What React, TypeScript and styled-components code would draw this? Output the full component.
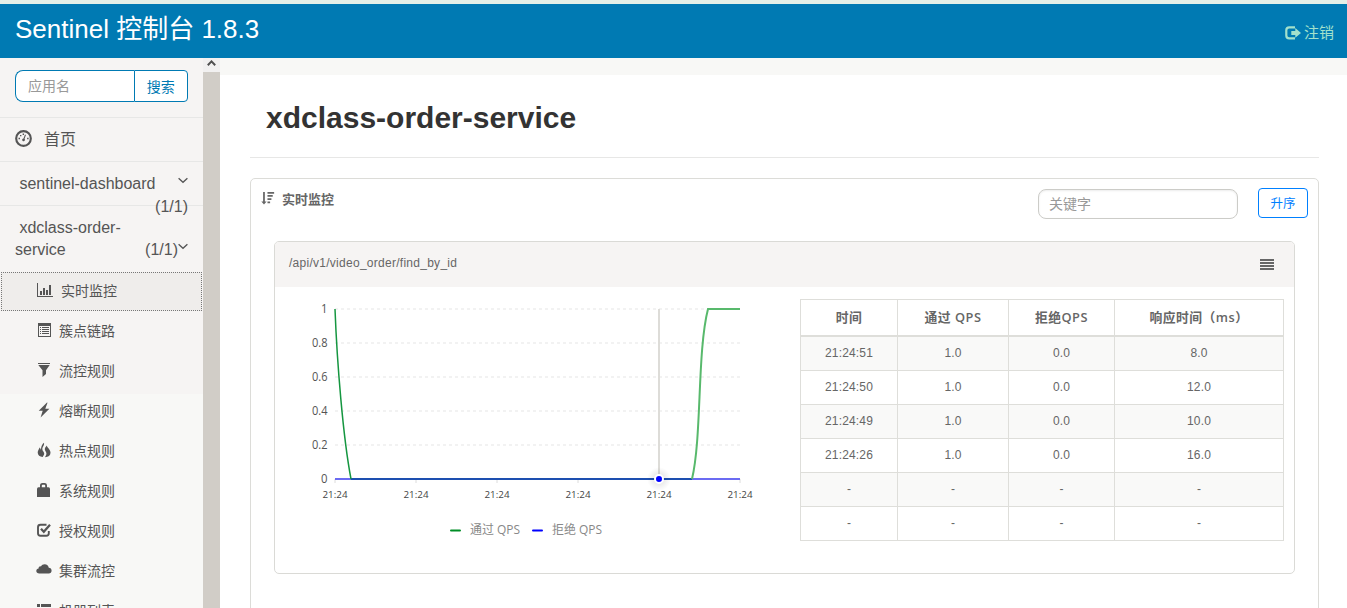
import React from "react";
import styled, { createGlobalStyle, css } from "styled-components";

const GlobalStyle = createGlobalStyle`
  *, *::before, *::after { box-sizing: border-box; }
  html, body { margin: 0; padding: 0; overflow: hidden; }
  body {
    background: #fff;
    color: #555;
    font-family: "Liberation Sans", "Noto Sans CJK SC", sans-serif;
    font-size: 14px;
  }
`;

const Page = styled.div`
  display: flex;
  flex-direction: column;
  height: 608px;
  width: 1347px;
  overflow: hidden;
`;

const Header = styled.header`
  display: flex;
  flex: none;
  justify-content: space-between;
  height: 58px;
  padding: 0 13px 0 15px;
  border-top: 4px solid #e4f0e8;
  background: #007ab3;
`;

const Brand = styled.div`
  color: #fff;
  font-size: 26px;
  line-height: 50px;
  white-space: nowrap;
`;

const Logout = styled.a`
  display: flex;
  align-items: center;
  gap: 3px;
  padding-top: 4px;
  color: #a3e1cc;
  font-size: 15px;
  line-height: 20px;
`;

const Body = styled.div`
  display: flex;
  flex: 1;
  min-height: 0;
`;

const Sidebar = styled.nav`
  width: 203px;
  flex: none;
  overflow: hidden;
  background: linear-gradient(#f6f4f3 336px, #f8f8f6 336px);
`;

const SearchBox = styled.div`
  display: flex;
  height: 60px;
  padding: 12px 15px 0;
  border-bottom: 1px solid #e7e7e6;
`;

const SearchField = styled.div`
  width: 120px;
  height: 32px;
  padding-left: 12px;
  border: 1px solid #007ab3;
  border-right: 0;
  border-radius: 8px 0 0 8px;
  background: #fff;
  color: #999;
  font-size: 14px;
  line-height: 31px;
`;

const SearchButton = styled.button`
  width: 54px;
  height: 32px;
  padding: 2px 1px 0 0;
  border: 1px solid #007ab3;
  border-radius: 0 4px 4px 0;
  background: #fff;
  color: #007ab3;
  font: 14px/28px "Liberation Sans", "Noto Sans CJK SC", sans-serif;
`;

const HomeItem = styled.div`
  display: flex;
  align-items: center;
  gap: 12px;
  height: 44px;
  padding: 0 15px 3px;
  border-bottom: 1px solid #e7e7e6;
  font-size: 16px;
`;

const AppItem = styled.div<{ $height: number; $line?: boolean }>`
  height: ${(p) => p.$height}px;
  padding: 11px 15px 0 15px;
  border-bottom: ${(p) => (p.$line ? "1px solid #e7e7e6" : "0")};
  font-size: 16px;
  line-height: 22px;
`;

const AppLine = styled.div<{ $indent?: boolean }>`
  display: flex;
  justify-content: space-between;
  padding-left: ${(p) => (p.$indent ? 4.4 : 0)}px;
  white-space: nowrap;
`;

const AppCount = styled.div`
  display: flex;
  justify-content: flex-end;
  line-height: 24px;
`;

const Caret = styled.svg`
  width: 10px;
  height: 7px;
  margin-top: 4px;
`;

const MenuItem = styled.div<{ $active?: boolean }>`
  display: flex;
  align-items: center;
  gap: ${(p) => (p.$active ? 8 : 7)}px;
  height: 40px;
  padding: 0 0 2px 36px;
  white-space: nowrap;
  ${(p) =>
    p.$active &&
    css`
      height: 39px;
      margin: 0 1px;
      padding: 0 0 3px 35px;
      border: 1px dotted #777;
      background: #efedeb;
    `}
`;

const Glyph = styled.svg<{ $size?: number }>`
  flex: none;
  width: ${(p) => p.$size ?? 16}px;
  height: ${(p) => p.$size ?? 16}px;
  fill: currentColor;
`;

const Scrollbar = styled.div`
  display: flex;
  flex-direction: column;
  flex: none;
  width: 17px;
  background: #d1cdc7;
`;

const ScrollArrow = styled.div`
  display: flex;
  align-items: center;
  justify-content: center;
  height: 14px;
  padding-bottom: 4px;
  background: #f1f0f0;
`;

const Content = styled.main`
  flex: 1;
  min-width: 0;
  padding: 0 28px 0 30px;
  border-top: 17px solid #f8f8f6;
`;

const Title = styled.h1`
  height: 83px;
  margin: 0 0 20px;
  padding: 22px 16px 0;
  border-bottom: 1px solid #e7e7e6;
  color: #333;
  font-size: 30px;
  font-weight: 700;
  line-height: 41px;
`;

const Panel = styled.section`
  height: 500px;
  padding: 0 10px;
  border: 1px solid #dcdcd8;
  border-radius: 5px;
`;

const PanelHead = styled.div`
  display: flex;
  align-items: flex-start;
  height: 62px;
  padding-top: 9px;
`;

const PanelName = styled.div`
  display: flex;
  flex: 1;
  align-items: center;
  gap: 7px;
  height: 20px;
  color: #666;
  font-size: 13px;
  font-weight: 700;
`;

const Keyword = styled.div`
  width: 200px;
  height: 30px;
  margin: 1px 20px 0 0;
  padding-left: 10px;
  border: 1px solid #ccccc8;
  border-radius: 8px;
  box-shadow: inset 0 1px 2px rgba(0, 0, 0, 0.08);
  color: #999;
  font-size: 14px;
  line-height: 28px;
`;

const SortButton = styled.button`
  width: 50px;
  height: 30px;
  padding: 2px 0 0;
  border: 1px solid #0080ff;
  border-radius: 4px;
  background: #fff;
  color: #0080ff;
  font: 12.5px/26px "Liberation Sans", "Noto Sans CJK SC", sans-serif;
`;

const Card = styled.div`
  height: 333px;
  margin: 0 13px;
  border: 1px solid #dadad6;
  border-radius: 5px;
  overflow: hidden;
`;

const CardHead = styled.div`
  display: flex;
  align-items: center;
  justify-content: space-between;
  height: 45px;
  padding: 0 19px 0 14px;
  background: #f6f4f3;
  color: #666;
  font-size: 12px;
  letter-spacing: 0.27px;
`;

const ResourceName = styled.span`
  padding-bottom: 3px;
`;

const CardBody = styled.div`
  display: flex;
  align-items: flex-start;
`;

const Chart = styled.svg`
  flex: none;
  width: 525px;
  height: 286px;
  font-family: "Open Sans", "Noto Sans CJK SC", sans-serif;
`;

const Table = styled.table`
  width: 484px;
  margin-top: 12px;
  border-collapse: collapse;
  table-layout: fixed;
  color: #666;
  font-size: 12px;
  letter-spacing: 0.17px;
  text-align: center;
`;

const Row = styled.tr<{ $odd?: boolean }>`
  height: 34px;
  background: ${(p) => (p.$odd ? "#f9f9f8" : "#fff")};

  tbody &:first-child {
    height: 35px;
  }
`;

const Cell = styled.td`
  padding: 0 0 1px;
  border: 1px solid #dededa;
`;

const HeadCell = styled.th`
  height: 36px;
  padding: 0;
  border: 1px solid #dededa;
  border-bottom-width: 2px;
  font-family: "Open Sans", "Noto Sans CJK SC", sans-serif;
  font-size: 12.8px;
  font-weight: 600;
  line-height: 20px;
  letter-spacing: 0.5px;
  white-space: nowrap;
`;

const ICONS: Record<string, React.ReactNode> = {
  chart: (
    <path d="M0 1h1v13h15v1H0zM3 9h2v4H3zM6 6h2v7H6zM9 8h2v5H9zM12 3h2v10h-2z" />
  ),
  list: (
    <path
      fillRule="evenodd"
      d="M2 1h13v14H2zM3 4v10h11V4zM4 5h1v1H4zM6 5h7v1H6zM4 7h1v1H4zM6 7h7v1H6zM4 9h1v1H4zM6 9h7v1H6zM4 11h1v1H4zM6 11h7v1H6z"
    />
  ),
  filter: <path d="M2 1h12v1H2zM2.300 3h11.400L10 8.300v3.700L6.500 15V8.300z" />,
  flash: <path d="M11 .5 2.700 8.800h4L4.600 15.500 13.400 6.800H9.300L11.500.8z" />,
  fire: (
    <path d="M8 .8c.6 3-1.900 4.100-1.600 6.800.2 1.800 1.800 2.300 1.800 4 0 1.300-.8 2.200-1.500 3.500-3-.3-5-2-5-4.600 0-2.200 1.300-3.200 1.900-5.100.8.700 1.100 1.600 1 2.600C5.600 6.600 4.500 3.800 8 .8zM10.800 3.500c.1 2.200 3.700 3.700 3.700 7.200 0 2.700-2 4.200-5.600 4.500.9-1.200 1.600-2.400 1.500-3.900-.1-1.600-1.600-2.300-1.600-4C8.800 5.500 9.800 4.800 10.800 3.500z" />
  ),
  lock: (
    <path
      fillRule="evenodd"
      d="M4 5.300V3.500C4 1.800 5.200 1 6.500 1h2C9.900 1 11 1.800 11 3.500v1.800h1.500q1.500.2 1.500 1.700v8H1V7q0-1.500 1.500-1.700zM5.800 5.300h3.400V3.600q0-.8-.8-.8H6.600q-.8 0-.8.8z"
    />
  ),
  check: (
    <>
      <path
        d="M10.500 2.800H4.500Q2 2.800 2 5.300v6Q2 13.800 4.500 13.800h5.800q2.500 0 2.500-2.500V9"
        fill="none"
        stroke="currentColor"
        strokeWidth="1.900"
      />
      <path
        d="m5 6.800 2.800 2.900 6.200-7"
        fill="none"
        stroke="currentColor"
        strokeWidth="2.300"
      />
    </>
  ),
  cloud: (
    <path d="M3.300 11.500C1.500 11.500.300 10.400.300 9c0-1.400 1-2.400 2.300-2.500C2.500 5 3.600 4.200 4.900 4.400 5.700 2.900 7 2.200 8.600 2.200c2.300 0 4 1.500 4.200 3.600 1.700 0 2.800 1.300 2.800 2.900 0 1.600-1.200 2.800-2.800 2.800z" />
  ),
  machines: (
    <path d="M1 2h3v3H1zM5 2h10v3H5zM1 6h3v3H1zM5 6h10v3H5zM1 10h3v3H1zM5 10h10v3H5z" />
  ),
  dashboard: (
    <>
      <circle
        cx="8"
        cy="8"
        r="6.900"
        fill="none"
        stroke="currentColor"
        strokeWidth="2"
      />
      <path d="M9.400 4.200 10.300 4.600 9 8.300a1.300 1.300 0 1 1-1-.4zM3.300 7.300h1.400v1.300H3.300zM4.700 4.600H6v1.300H4.700zM7.200 3.300h1.300v1.300H7.200zM11.400 7.300h1.400v1.300h-1.400z" />
    </>
  ),
  logout: (
    <>
      <path
        d="M10 2.400H4.200Q1.300 2.400 1.300 5.300v5.200q0 2.900 2.900 2.900H10"
        fill="none"
        stroke="currentColor"
        strokeWidth="2.200"
      />
      <path d="M6.300 5.900h4V3.100L16 7.900l-5.700 4.800V9.900h-4z" />
    </>
  ),
  sort: (
    <path d="M2.400 1h2v11h2L3.400 15.500.4 12h2zM7.400 1H15v2H7.400zM7.400 4.600h6V6.600h-6zM7.400 8.300h4.500v2H7.400zM7.400 12h3v2h-3z" />
  ),
  lines: <path d="M1 2h14v2H1zM1 5h14v2H1zM1 8h14v2H1zM1 11h14v2H1z" />,
};

const Icon = ({ name, size }: { name: string; size?: number }) => (
  <Glyph viewBox="0 0 16 16" $size={size}>
    {ICONS[name]}
  </Glyph>
);

const Chevron = () => (
  <Caret viewBox="0 0 10 7">
    <path d="M.6 1.200 5 5.300 9.400 1.200" fill="none" stroke="#555" strokeWidth="1.300" />
  </Caret>
);

const MENU = [
  ["chart", "实时监控"],
  ["list", "簇点链路"],
  ["filter", "流控规则"],
  ["flash", "熔断规则"],
  ["fire", "热点规则"],
  ["lock", "系统规则"],
  ["check", "授权规则"],
  ["cloud", "集群流控"],
  ["machines", "机器列表"],
];

const COLUMNS: [string, number][] = [
  ["时间", 97],
  ["通过 QPS", 111],
  ["拒绝QPS", 106],
  ["响应时间（ms）", 169],
];

const ROWS = [
  ["21:24:51", "1.0", "0.0", "8.0"],
  ["21:24:50", "1.0", "0.0", "12.0"],
  ["21:24:49", "1.0", "0.0", "10.0"],
  ["21:24:26", "1.0", "0.0", "16.0"],
  ["-", "-", "-", "-"],
  ["-", "-", "-", "-"],
];

const Y_TICKS = ["1", "0.8", "0.6", "0.4", "0.2", "0"];
const X_TICKS = [60, 141, 222, 303, 384, 465];

const QpsChart = () => (
  <Chart viewBox="0 0 525 286">
    <defs>
      <radialGradient id="halo">
        <stop offset="0.350" stopColor="#000" stopOpacity="0.090" />
        <stop offset="1" stopColor="#000" stopOpacity="0" />
      </radialGradient>
    </defs>
    {Y_TICKS.map((t, i) => (
      <g key={t}>
        {i < 5 && (
          <line
            x1="60"
            x2="465"
            y1={22 + i * 34}
            y2={22 + i * 34}
            stroke="#f2f2f2"
            strokeWidth="2"
            strokeDasharray="3 3"
          />
        )}
        <text
          x={t.length > 1 ? 37 : 46}
          y={26.3 + i * 34}
          fontSize="12"
          textLength={t.length > 1 ? 15.5 : 6.5}
          lengthAdjust="spacingAndGlyphs"
          fill="#545454"
        >
          {t}
        </text>
      </g>
    ))}
    {X_TICKS.map((x) => (
      <g key={x}>
        <path d={`M${x} 192v4`} stroke="#dcdcdc" />
        <text
          x={x - 12.5}
          y="210.500"
          fontSize="9.800"
          textLength="25"
          lengthAdjust="spacingAndGlyphs"
          fill="#444"
        >
          21:24
        </text>
      </g>
    ))}
    <path d="M384 22v170" stroke="#dddcd8" strokeWidth="2" />
    <path d="M60 192h405" stroke="#6b6bf2" strokeWidth="2" />
    <path d="M76 192h341" stroke="#1d4fb0" strokeWidth="2" />
    <path d="M60 22C62 75 68 150 76 192" fill="none" stroke="#159640" strokeWidth="1.500" />
    <path
      d="M417 192C427 150 422 65 433 22H465"
      fill="none"
      stroke="#58b96c"
      strokeWidth="2"
    />
    <circle cx="384" cy="192" r="12" fill="url(#halo)" />
    <circle cx="384" cy="192" r="4" fill="#00f" stroke="#fff" strokeWidth="2" />
    <path d="M176 243.500h9" stroke="#008d26" strokeWidth="2" strokeLinecap="round" />
    <path d="M258 243.500h9" stroke="#00f" strokeWidth="2" strokeLinecap="round" />
    <g fontSize="12" fill="#888">
      <text x="195" y="247" textLength="50" lengthAdjust="spacingAndGlyphs">
        通过 QPS
      </text>
      <text x="277" y="247" textLength="50" lengthAdjust="spacingAndGlyphs">
        拒绝 QPS
      </text>
    </g>
  </Chart>
);

export default function App() {
  return (
    <Page>
      <GlobalStyle />
      <Header>
        <Brand>Sentinel 控制台 1.8.3</Brand>
        <Logout>
          <Icon name="logout" />
          注销
        </Logout>
      </Header>
      <Body>
        <Sidebar>
          <SearchBox>
            <SearchField>应用名</SearchField>
            <SearchButton>搜索</SearchButton>
          </SearchBox>
          <HomeItem>
            <Icon name="dashboard" size={17} />
            首页
          </HomeItem>
          <AppItem $height={44} $line>
            <AppLine $indent>
              sentinel-dashboard
              <Chevron />
            </AppLine>
            <AppCount>(1/1)</AppCount>
          </AppItem>
          <AppItem $height={66}>
            <AppLine $indent>xdclass-order-</AppLine>
            <AppLine>
              service
              <AppLine>
                (1/1)
                <Chevron />
              </AppLine>
            </AppLine>
          </AppItem>
          {MENU.map(([icon, label], i) => (
            <MenuItem key={label} $active={i === 0}>
              <Icon name={icon} />
              {label}
            </MenuItem>
          ))}
        </Sidebar>
        <Scrollbar>
          <ScrollArrow>
            <svg width="9" height="6" viewBox="0 0 9 6">
              <path d="M.8 5.200 4.500 1.400 8.200 5.200" fill="none" stroke="#505050" strokeWidth="2" />
            </svg>
          </ScrollArrow>
        </Scrollbar>
        <Content>
          <Title>xdclass-order-service</Title>
          <Panel>
            <PanelHead>
              <PanelName>
                <Icon name="sort" size={14} />
                实时监控
              </PanelName>
              <Keyword>关键字</Keyword>
              <SortButton>升序</SortButton>
            </PanelHead>
            <Card>
              <CardHead>
                <ResourceName>/api/v1/video_order/find_by_id</ResourceName>
                <Icon name="lines" />
              </CardHead>
              <CardBody>
                <QpsChart />
                <Table>
                  <colgroup>
                    {COLUMNS.map(([name, width]) => (
                      <col key={name} width={width} />
                    ))}
                  </colgroup>
                  <thead>
                    <Row>
                      {COLUMNS.map(([name]) => (
                        <HeadCell key={name}>{name}</HeadCell>
                      ))}
                    </Row>
                  </thead>
                  <tbody>
                    {ROWS.map((row, i) => (
                      <Row key={i} $odd={i % 2 === 0}>
                        {row.map((value, j) => (
                          <Cell key={j}>{value}</Cell>
                        ))}
                      </Row>
                    ))}
                  </tbody>
                </Table>
              </CardBody>
            </Card>
          </Panel>
        </Content>
      </Body>
    </Page>
  );
}
